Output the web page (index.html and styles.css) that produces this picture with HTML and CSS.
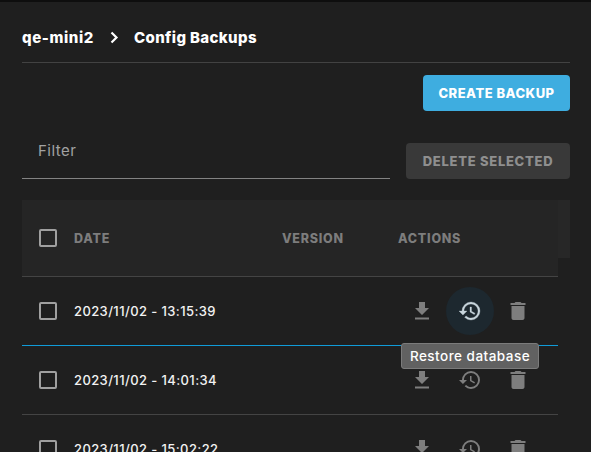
FILE: index.html
```html
<!DOCTYPE html>
<html lang="en">
<head>
<meta charset="utf-8">
<title>Config Backups</title>
<link rel="stylesheet" href="styles.css">
</head>
<body>
<svg class="defs" aria-hidden="true">
  <symbol id="download" viewBox="0 0 24 24"><path d="M5 20.400h14v-2H5v2zM19 9h-4V3H9v6H5l7 7 7-7z"/></symbol>
  <symbol id="restore" viewBox="0 0 24 24"><path d="M13 3a9 9 0 0 0-9 9H1l3.890 3.890.07.14L9 12H6c0-3.870 3.130-7 7-7s7 3.130 7 7-3.130 7-7 7c-1.930 0-3.680-.79-4.940-2.060l-1.420 1.420A8.950 8.950 0 0 0 13 21a9 9 0 0 0 0-18zm-1 5v5l4.280 2.540.72-1.210-3.500-2.080V8H12z"/></symbol>
  <symbol id="trash" viewBox="0 0 24 24"><path d="M5.500 7h13v12c0 1.100-.9 2-2 2h-9c-1.100 0-2-.9-2-2V7zM19.500 4h-4l-1-1h-5l-1 1h-4v2h15V4z"/></symbol>
</svg>
<main class="page">
  <nav class="breadcrumb">
    <span class="crumb crumb-host">qe-mini2</span>
    <svg class="chevron" viewBox="0 0 9 13"><path d="M1.500 1.500 6.500 6.500 1.500 11.500"/></svg>
    <span class="crumb crumb-current">Config Backups</span>
  </nav>
  <div class="create-bar"><button class="btn btn-primary"><span>CREATE BACKUP</span></button></div>
  <div class="toolbar">
    <label class="filter">Filter</label>
    <button class="btn btn-disabled"><span>DELETE SELECTED</span></button>
  </div>
  <section class="table-wrap">
    <div class="table">
      <div class="row head">
        <i class="checkbox"></i><span class="date">DATE</span><span class="version">VERSION</span><span class="actions-label">ACTIONS</span>
      </div>
      <div class="row active">
        <i class="checkbox"></i><span class="date">2023/11/02 - 13:15:39</span>
        <div class="actions">
          <span class="action"><svg><use href="#download"/></svg></span>
          <span class="action hovered"><svg><use href="#restore"/></svg><span class="tooltip">Restore database</span></span>
          <span class="action"><svg><use href="#trash"/></svg></span>
        </div>
      </div>
      <div class="row">
        <i class="checkbox"></i><span class="date">2023/11/02 - 14:01:34</span>
        <div class="actions">
          <span class="action"><svg><use href="#download"/></svg></span>
          <span class="action"><svg><use href="#restore"/></svg></span>
          <span class="action"><svg><use href="#trash"/></svg></span>
        </div>
      </div>
      <div class="row">
        <i class="checkbox"></i><span class="date">2023/11/02 - 15:02:22</span>
        <div class="actions">
          <span class="action"><svg><use href="#download"/></svg></span>
          <span class="action"><svg><use href="#restore"/></svg></span>
          <span class="action"><svg><use href="#trash"/></svg></span>
        </div>
      </div>
    </div>
  </section>
</main>
</body>
</html>
```
FILE: styles.css
```css
* { box-sizing: border-box; }
body { margin: 0; height: 452px; overflow: hidden; background: #1f1f1f; color: #fff; font-family: Inter, "Liberation Sans", sans-serif; }
.defs { display: none; }
.page { height: 452px; padding: 10px 21px 0 22px; border-top: 2px solid #0e0e0e; overflow: hidden; }
.breadcrumb { display: flex; align-items: center; height: 51px; border-bottom: 1px solid #424242; font-size: 15px; font-weight: 800; white-space: nowrap; }
.crumb-host { width: 88px; letter-spacing: .6px; }
.crumb-current { letter-spacing: .37px; margin-left: 15px; }
.chevron { width: 9px; height: 13px; fill: none; stroke: #fff; stroke-width: 2.2; }
.create-bar { display: flex; justify-content: flex-end; margin-top: 12px; }
.btn { height: 36px; padding: 0; border: 0; border-radius: 4px; font: 800 13px Inter, sans-serif; white-space: nowrap; }
.btn-primary { width: 147px; color: #fff; background: #3eade0; letter-spacing: .48px; }
.btn-disabled { width: 164px; color: #8f8f8f; background: #393939; letter-spacing: .72px; }
.toolbar { display: flex; gap: 16px; margin-top: 32px; }
.filter { flex: 1; height: 36px; padding: 0 16px; border-bottom: 1px solid #838383; color: #a2a2a2; font-size: 15px; line-height: 16px; letter-spacing: .5px; }
.table-wrap { height: 58px; margin-top: 21px; background: #272727; }
.table { width: 536px; }
.row { display: flex; align-items: center; height: 69px; padding-left: 17px; border-bottom: 1px solid #444; }
.head { height: 77px; background: #252525; color: #7d7d7d; font-size: 12.5px; font-weight: 800; letter-spacing: .75px; }
.active { border-color: #109bd8; }
.checkbox { width: 18px; height: 18px; margin-right: 17px; border: 2px solid #a0a0a0; border-radius: 2px; }
.date { width: 208px; color: #f2f2f2; font-size: 13px; font-weight: 500; letter-spacing: .4px; white-space: nowrap; }
.head .date { color: inherit; font-size: inherit; font-weight: inherit; letter-spacing: inherit; }
.version { width: 116px; }
.actions { display: flex; margin-left: 116px; }
.action { position: relative; display: flex; align-items: center; justify-content: center; width: 48px; height: 48px; border-radius: 50%; }
.action svg { width: 24px; height: 24px; fill: #7e7e7e; }
.hovered { background: #1d282f; }
.hovered svg { fill: #c8d5dc; stroke: #c8d5dc; stroke-width: .3; }
.tooltip { position: absolute; z-index: 2; top: 56px; left: -45px; width: 138px; height: 26px; border: 1px solid #7b7b7b; border-radius: 3px; background: #616161; color: #fff; font-size: 13.5px; font-weight: 500; letter-spacing: .48px; line-height: 25px; text-align: center; white-space: nowrap; }
```
